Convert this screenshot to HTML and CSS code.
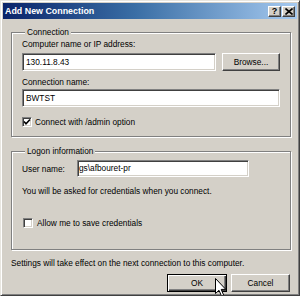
FILE: index.html
```html
<!DOCTYPE html>
<html>
<head>
<meta charset="utf-8">
<link rel="stylesheet" href="styles.css">
</head>
<body>
<div class="window">
  <div class="titlebar">
    <span class="title">Add New Connection</span>
    <div class="tbtns">
      <span class="tbtn">?</span>
      <span class="tbtn x">
        <svg width="8" height="7" viewBox="0 0 8 7"><path d="M0.5 0.5 L7.5 6.5 M7.5 0.5 L0.5 6.5" stroke="#000" stroke-width="1.6"/></svg>
      </span>
    </div>
  </div>
  <div class="client">
    <fieldset class="group g1">
      <legend>Connection</legend>
      <div class="lbl">Computer name or IP address:</div>
      <div class="row r1">
        <div class="input grow">130.11.8.43</div>
        <div class="btn browse">Browse...</div>
      </div>
      <div class="lbl l2">Connection name:</div>
      <div class="input i2">BWTST</div>
      <label class="chk c1">
        <span class="box"><svg width="8" height="8" viewBox="0 0 8 8"><path d="M1 3.5 L3 5.8 L7 1.5" fill="none" stroke="#000" stroke-width="1.6"/></svg></span>
        <span>Connect with /admin option</span>
      </label>
    </fieldset>
    <fieldset class="group g2">
      <legend>Logon information</legend>
      <div class="row urow">
        <span class="ulbl">User name:</span>
        <div class="input user">gs\afbouret-pr</div>
      </div>
      <div class="note">You will be asked for credentials when you connect.</div>
      <label class="chk c2">
        <span class="box"></span>
        <span>Allow me to save credentials</span>
      </label>
    </fieldset>
    <div class="settings">Settings will take effect on the next connection to this computer.</div>
    <div class="actions">
      <div class="btn ok">OK</div>
      <div class="btn cancel">Cancel</div>
    </div>
  </div>
  <svg class="cursor" width="12" height="19" viewBox="0 0 12 19"><path d="M0.5 0.5 L0.5 15.5 L4 12.3 L6.5 18 L8.6 17 L6.2 11.4 L10.8 11.4 Z" fill="#fff" stroke="#000" stroke-width="1"/></svg>
</div>
</body>
</html>
```
FILE: styles.css
```css
html, body {
  margin: 0;
  padding: 0;
  background: #d4d0c8;
}
.window {
  position: relative;
  width: 300px;
  height: 296px;
  box-sizing: border-box;
  background: #d4d0c8;
  border-style: solid;
  border-width: 1px;
  border-color: #e8e6e0 #404040 #404040 #e8e6e0;
  box-shadow: inset 1px 1px #fff, inset -1px -1px #808080;
  font-family: "Liberation Sans", Arial, sans-serif;
  font-size: 8.3px;
  color: #000;
  overflow: hidden;
  display: flex;
  flex-direction: column;
}
.titlebar {
  margin: 2px 2px 0 2px;
  height: 16px;
  background: linear-gradient(to right, #0a246a 0%, #3a6ea5 45%, #a6caf0 100%);
  display: flex;
  align-items: center;
  justify-content: space-between;
  padding-left: 2px;
}
.title {
  color: #fff;
  font-weight: bold;
  font-size: 8.9px;
}
.tbtns {
  display: flex;
  gap: 1px;
  padding-right: 2px;
}
.tbtn {
  width: 13px;
  height: 11px;
  box-sizing: border-box;
  background: #d4d0c8;
  border-style: solid;
  border-width: 1px;
  border-color: #fff #404040 #404040 #fff;
  box-shadow: inset -1px -1px #808080;
  display: flex;
  align-items: center;
  justify-content: center;
  font-weight: bold;
  font-size: 9px;
  line-height: 9px;
}
.client {
  display: flex;
  flex-direction: column;
  padding: 0 8px 0 10px;
}
.group {
  margin: 0;
  border: 1px solid #808080;
  box-shadow: inset 1px 1px #fff, 1px 1px #fff;
  padding: 2px 10px 9px 10px;
  min-width: 0;
  display: flex;
  flex-direction: column;
}
.group legend {
  padding: 0 2px;
  margin-left: 3px;
  line-height: 10px;
  height: 10px;
  background: #d4d0c8;
  position: relative;
}
.g1 { margin-top: 8px; }
.g2 { margin-top: 9px; padding-top: 4px; padding-bottom: 21px; }
.lbl {
  line-height: 10px;
}
.row {
  display: flex;
  align-items: center;
}
.r1 {
  margin-top: 4px;
  gap: 6px;
}
.input {
  height: 18px;
  box-sizing: border-box;
  background: #fff;
  border-style: solid;
  border-width: 1px;
  border-color: #808080 #fff #fff #808080;
  box-shadow: inset 1px 1px #404040, inset -1px -1px #d4d0c8;
  padding: 0 3px;
  line-height: 16px;
  white-space: nowrap;
}
.grow { flex: 1; }
.btn {
  height: 18px;
  box-sizing: border-box;
  background: #d4d0c8;
  border-style: solid;
  border-width: 1px;
  border-color: #fff #404040 #404040 #fff;
  box-shadow: inset -1px -1px #808080;
  display: flex;
  align-items: center;
  justify-content: center;
}
.browse { width: 58px; }
.l2 { margin-top: 6px; }
.i2 { margin-top: 2px; }
.chk {
  display: flex;
  align-items: center;
  gap: 3px;
  line-height: 10px;
}
.c1 { margin-top: 10px; }
.box {
  width: 10px;
  height: 10px;
  box-sizing: border-box;
  background: #fff;
  border-style: solid;
  border-width: 1px;
  border-color: #808080 #fff #fff #808080;
  box-shadow: inset 1px 1px #404040, inset -1px -1px #d4d0c8;
  display: flex;
  align-items: center;
  justify-content: center;
}
.urow { gap: 0; }
.ulbl { width: 55px; }
.user {
  width: 172px;
  height: 17px;
  line-height: 15px;
  padding-left: 1px;
}
.note {
  margin-top: 9px;
  line-height: 10px;
}
.c2 { margin-top: 22px; margin-left: 1px; gap: 4px; }
.settings {
  margin-top: 8px;
  line-height: 10px;
}
.actions {
  margin-top: 6px;
  display: flex;
  justify-content: flex-end;
  gap: 4px;
  padding-right: 1px;
}
.ok {
  width: 60px;
  border: 1px solid #000;
  box-shadow: inset 1px 1px #fff, inset -1px -1px #404040, inset -2px -2px #808080;
}
.cancel { width: 59px; }
.cursor {
  position: absolute;
  left: 214px;
  top: 277px;
}
```
